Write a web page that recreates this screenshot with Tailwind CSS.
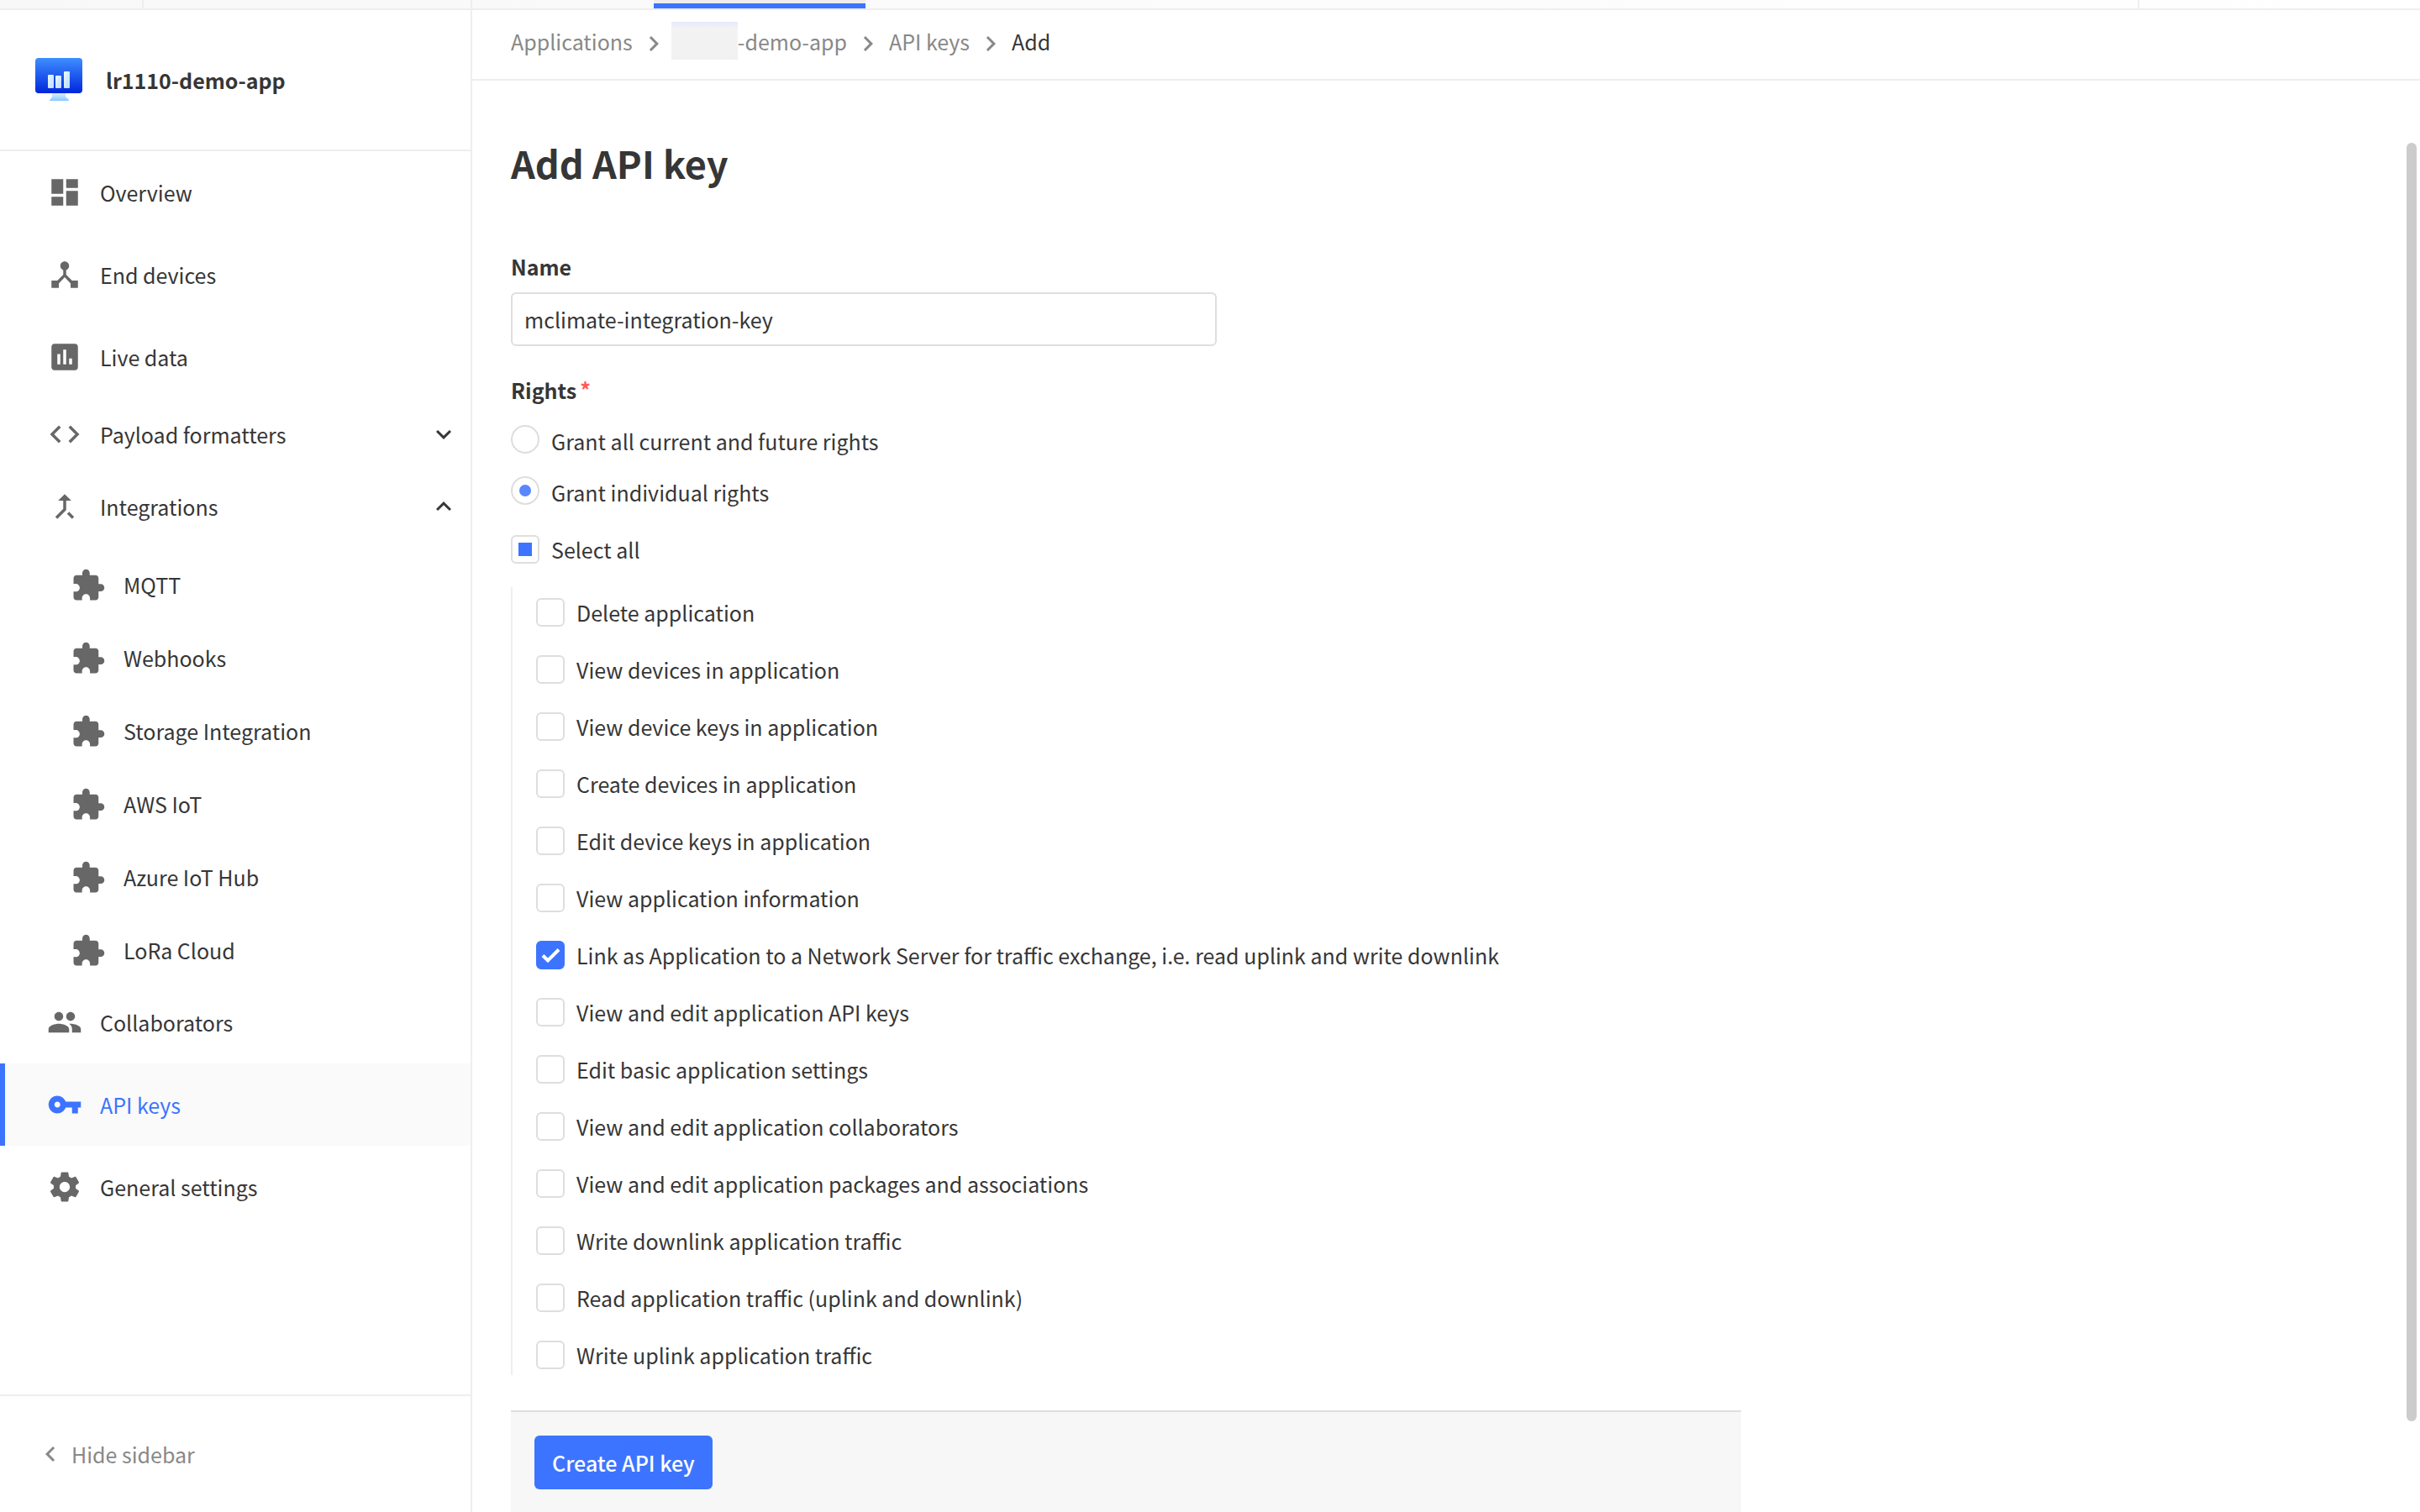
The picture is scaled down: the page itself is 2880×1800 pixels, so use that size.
<!DOCTYPE html>
<html lang="en">
<head>
<meta charset="utf-8">
<title>Add API key</title>
<script src="https://cdn.jsdelivr.net/npm/@tailwindcss/browser@4"></script>
</head>
<body class="flex h-screen flex-col overflow-hidden bg-white font-['Noto_Sans_CJK_SC',sans-serif] text-[25px] leading-[35px] text-[#363636]">

<svg class="hidden" aria-hidden="true">
  <symbol id="puzzle" viewBox="0 0 24 24"><path d="M20.5 11H19V7c0-1.1-.9-2-2-2h-4V3.5C13 2.12 11.88 1 10.5 1S8 2.12 8 3.5V5H4c-1.1 0-1.99.9-1.99 2v3.8H3.5c1.49 0 2.7 1.21 2.7 2.7s-1.21 2.7-2.7 2.7H2V20c0 1.1.9 2 2 2h3.8v-1.5c0-1.49 1.21-2.7 2.7-2.7 1.49 0 2.7 1.21 2.7 2.7V22H17c1.1 0 2-.9 2-2v-4h1.5c1.38 0 2.5-1.12 2.5-2.5S21.88 11 20.5 11z"/></symbol>
  <symbol id="chevron-right" viewBox="0 0 24 24"><path d="M10 6L8.59 7.41 13.17 12l-4.58 4.59L10 18l6-6z"/></symbol>
  <symbol id="tick" viewBox="0 0 34 34"><path d="M8 17.5L14 23.5L27 10.5" fill="none" stroke="currentColor" stroke-width="4"/></symbol>
</svg>

<!-- Lower edge of the top navigation -->
<header class="flex h-3 shrink-0 border-b-2 border-[#eee] bg-linear-to-r from-[#f8f8f8] to-white">
  <div class="w-[171px] border-r-2 border-[#eee]"></div>
  <div class="w-[391px] border-r-2 border-[#eee]"></div>
  <div class="w-[216px]"></div>
  <div class="w-[252px] border-b-6 border-[#3d74ff] bg-[#eee]"></div>
  <div class="mr-[334px] flex-1 border-r-2 border-[#eee]"></div>
</header>

<div class="flex min-h-0 flex-1">
  <aside class="flex w-[562px] shrink-0 flex-col border-r-2 border-[#eee]">
    <div class="flex h-[168px] items-center gap-7 border-b-2 border-[#eee] pl-[42px]">
      <svg class="h-[52px] w-14" viewBox="0 0 56 52" aria-hidden="true">
        <defs>
          <linearGradient id="screen" x1="0" y1="0" x2="0" y2="1"><stop offset="0" stop-color="#3f8eff"/><stop offset="1" stop-color="#0026dc"/></linearGradient>
          <linearGradient id="stand" x1="0" y1="0" x2="0" y2="1"><stop offset="0" stop-color="#e6f4ff"/><stop offset="1" stop-color="#86c8ff"/></linearGradient>
          <linearGradient id="bars" x1="0" y1="0" x2="1" y2="1"><stop offset="0" stop-color="#f0f8ff"/><stop offset="1" stop-color="#b4dcff"/></linearGradient>
        </defs>
        <path d="M20 41h16v4q0 2 2 3q2 1 2 3H17q0-2 2-3q1-1 1-3z" fill="url(#stand)"/>
        <rect width="56" height="42" rx="4" fill="url(#screen)"/>
        <g fill="url(#bars)"><rect x="15" y="20" width="7" height="16" rx="1"/><rect x="24" y="21" width="7" height="15" rx="1"/><rect x="34" y="16" width="7" height="20" rx="1"/></g>
      </svg>
      <span class="font-bold">lr1110-demo-app</span>
    </div>

    <nav class="flex flex-1 flex-col fill-[#676767]">
      <a href="#" class="flex h-[98px] items-center gap-[21px] pl-14">
        <svg class="size-[42px]" viewBox="0 0 24 24"><path d="M3 13h8V3H3v10zm0 8h8v-6H3v6zm10 0h8V11h-8v10zm0-18v6h8V3h-8z"/></svg>
        Overview
      </a>
      <a href="#" class="flex h-[98px] items-center gap-[21px] pl-14">
        <svg class="size-[42px]" viewBox="0 0 24 24"><path d="M17 16l-4-4V8.82C14.16 8.4 15 7.3 15 6c0-1.66-1.34-3-3-3S9 4.34 9 6c0 1.3.84 2.4 2 2.82V12l-4 4H3v5h5v-3.05l4-4.2 4 4.2V21h5v-5h-4z"/></svg>
        End devices
      </a>
      <a href="#" class="flex h-[98px] items-center gap-[21px] pl-14">
        <svg class="size-[42px]" viewBox="0 0 24 24"><path d="M19 3H5c-1.1 0-2 .9-2 2v14c0 1.1.9 2 2 2h14c1.1 0 2-.9 2-2V5c0-1.1-.9-2-2-2zM9 17H7v-7h2v7zm4 0h-2V7h2v10zm4 0h-2v-4h2v4z"/></svg>
        Live data
      </a>
      <button type="button" class="flex h-[86px] items-center gap-[21px] pr-3.5 pl-14 text-left">
        <svg class="size-[42px]" viewBox="0 0 24 24"><path d="M9.4 16.6L4.8 12l4.6-4.6L8 6l-6 6 6 6 1.4-1.4zm5.2 0l4.6-4.6-4.6-4.6L16 6l6 6-6 6-1.4-1.4z"/></svg>
        <span class="flex-1">Payload formatters</span>
        <svg class="size-9 fill-[#363636]" viewBox="0 0 24 24"><path d="M16.59 8.59L12 13.17 7.41 8.59 6 10l6 6 6-6z"/></svg>
      </button>
      <button type="button" class="flex h-[86px] items-center gap-[21px] pr-3.5 pl-14 text-left">
        <svg class="size-[42px]" viewBox="0 0 24 24"><path d="M17 20.41L18.41 19 15 15.59 13.59 17 17 20.41zM7.5 8H11v5.59L5.59 19 7 20.41l6-6V8h3.5L12 3.5 7.5 8z"/></svg>
        <span class="flex-1">Integrations</span>
        <svg class="size-9 fill-[#363636]" viewBox="0 0 24 24"><path d="M12 8l-6 6 1.41 1.41L12 10.83l4.59 4.58L18 14z"/></svg>
      </button>
      <div class="flex flex-col">
        <a href="#" class="flex h-[87px] items-center gap-[21px] pt-3.5 pl-[84px]"><svg class="size-[42px]"><use href="#puzzle"/></svg>MQTT</a>
        <a href="#" class="flex h-[87px] items-center gap-[21px] pt-3.5 pl-[84px]"><svg class="size-[42px]"><use href="#puzzle"/></svg>Webhooks</a>
        <a href="#" class="flex h-[87px] items-center gap-[21px] pt-3.5 pl-[84px]"><svg class="size-[42px]"><use href="#puzzle"/></svg>Storage Integration</a>
        <a href="#" class="flex h-[87px] items-center gap-[21px] pt-3.5 pl-[84px]"><svg class="size-[42px]"><use href="#puzzle"/></svg>AWS IoT</a>
        <a href="#" class="flex h-[87px] items-center gap-[21px] pt-3.5 pl-[84px]"><svg class="size-[42px]"><use href="#puzzle"/></svg>Azure IoT Hub</a>
        <a href="#" class="flex h-[87px] items-center gap-[21px] pt-3.5 pl-[84px]"><svg class="size-[42px]"><use href="#puzzle"/></svg>LoRa Cloud</a>
      </div>
      <a href="#" class="flex h-[98px] items-center gap-[21px] pl-14">
        <svg class="size-[42px]" viewBox="0 0 24 24"><path d="M16 11c1.66 0 2.99-1.34 2.99-3S17.66 5 16 5c-1.66 0-3 1.34-3 3s1.34 3 3 3zm-8 0c1.66 0 2.99-1.34 2.99-3S9.66 5 8 5C6.34 5 5 6.34 5 8s1.34 3 3 3zm0 2c-2.33 0-7 1.17-7 3.5V19h14v-2.5c0-2.33-4.67-3.5-7-3.5zm8 0c-.29 0-.62.02-.97.05 1.16.84 1.97 1.97 1.97 3.45V19h6v-2.5c0-2.33-4.67-3.5-7-3.5z"/></svg>
        Collaborators
      </a>
      <a href="#" aria-current="page" class="flex h-[98px] items-center gap-[21px] border-l-6 border-[#3d74ff] bg-[#fafafa] fill-[#3d74ff] pl-[50px] text-[#3d74ff]">
        <svg class="size-[42px]" viewBox="0 0 24 24"><path d="M12.65 10C11.83 7.67 9.61 6 7 6c-3.31 0-6 2.69-6 6s2.69 6 6 6c2.61 0 4.83-1.67 5.65-4H17v4h4v-4h2v-4H12.65zM7 14c-1.1 0-2-.9-2-2s.9-2 2-2 2 .9 2 2-.9 2-2 2z"/></svg>
        API keys
      </a>
      <a href="#" class="flex h-[98px] items-center gap-[21px] pl-14">
        <svg class="size-[42px]" viewBox="0 0 24 24"><path d="M19.43 12.98c.04-.32.07-.64.07-.98s-.03-.66-.07-.98l2.11-1.65c.19-.15.24-.42.12-.64l-2-3.46c-.12-.22-.39-.3-.61-.22l-2.49 1c-.52-.4-1.08-.73-1.69-.98l-.38-2.65C14.46 2.18 14.25 2 14 2h-4c-.25 0-.46.18-.49.42l-.38 2.65c-.61.25-1.17.59-1.69.98l-2.49-1c-.23-.09-.49 0-.61.22l-2 3.46c-.13.22-.07.49.12.64l2.11 1.65c-.04.32-.07.65-.07.98s.03.66.07.98l-2.11 1.65c-.19.15-.24.42-.12.64l2 3.46c.12.22.39.3.61.22l2.49-1c.52.4 1.08.73 1.69.98l.38 2.65c.03.24.24.42.49.42h4c.25 0 .46-.18.49-.42l.38-2.65c.61-.25 1.17-.59 1.69-.98l2.49 1c.23.09.49 0 .61-.22l2-3.46c.12-.22.07-.49-.12-.64l-2.11-1.65zM12 15.5c-1.93 0-3.5-1.57-3.5-3.5s1.57-3.5 3.5-3.5 3.5 1.57 3.5 3.5-1.57 3.5-3.5 3.5z"/></svg>
        General settings
      </a>
    </nav>

    <button type="button" class="flex h-[140px] items-center gap-[7px] border-t-2 border-[#eee] fill-[#888] pl-[42px] text-[#888]">
      <svg class="size-9" viewBox="0 0 24 24"><path d="M15.41 7.41L14 6l-6 6 6 6 1.41-1.41L10.83 12z"/></svg>
      Hide sidebar
    </button>
  </aside>

  <main class="flex min-w-0 flex-1 flex-col">
    <nav aria-label="Breadcrumb" class="flex h-[84px] shrink-0 items-start gap-[7px] border-b-2 border-[#eee] fill-[#888] pt-5 pl-[46px] text-[#888]">
      <a href="#">Applications</a>
      <svg class="mt-0.5 size-9"><use href="#chevron-right"/></svg>
      <a href="#" class="-mt-1.5 -ml-1 flex"><span class="h-[45px] w-[79px] bg-linear-to-b from-[#e6ebfb] via-[#f3f3f3] via-20% to-[#f1f1f1]"></span><span class="pt-1.5">-demo-app</span></a>
      <svg class="mt-0.5 size-9"><use href="#chevron-right"/></svg>
      <a href="#">API keys</a>
      <svg class="mt-0.5 size-9"><use href="#chevron-right"/></svg>
      <span class="text-[#363636]">Add</span>
    </nav>

    <form class="flex w-full max-w-[1510px] flex-1 flex-col pl-[46px]">
      <h1 class="mt-[66px] text-[45px] leading-[64px] font-bold">Add API key</h1>

      <label for="name" class="mt-[74px] font-bold">Name</label>
      <input id="name" type="text" value="mclimate-integration-key" class="mt-[13px] h-16 w-full max-w-[840px] rounded-md border-2 border-[#dedede] px-3.5">

      <fieldset class="mt-[34px]">
        <legend class="contents font-bold"><span class="flex h-9 items-center gap-1">Rights<span class="h-9 text-[#ff5c5c]">*</span></span></legend>
        <div class="mt-6 flex flex-col gap-[27px]">
          <label class="flex h-[34px] items-center gap-3.5">
            <span class="grid place-items-center">
              <input type="radio" name="rights" class="peer col-start-1 row-start-1 size-[34px] appearance-none rounded-full border-2 border-[#dedede]">
            </span>
            <span class="pt-1">Grant all current and future rights</span>
          </label>
          <label class="flex h-[34px] items-center gap-3.5">
            <span class="grid place-items-center">
              <input type="radio" name="rights" checked class="peer col-start-1 row-start-1 size-[34px] appearance-none rounded-full border-2 border-[#dedede]">
              <span class="col-start-1 row-start-1 hidden size-3.5 rounded-full bg-[#5886ff] peer-checked:block"></span>
            </span>
            <span class="pt-1">Grant individual rights</span>
          </label>
        </div>
        <label class="mt-9 flex h-[34px] items-center gap-3.5">
          <span class="grid place-items-center">
            <input id="select-all" type="checkbox" class="peer col-start-1 row-start-1 size-[34px] appearance-none rounded-md border-2 border-[#dedede]">
            <span class="col-start-1 row-start-1 hidden size-4 bg-[#3d74ff] peer-indeterminate:block"></span>
          </span>
          Select all
        </label>

        <div class="mt-7 flex flex-col gap-[34px] border-l-2 border-[#eee] pt-[13px] pb-[7px] pl-7">
          <label class="flex h-[34px] items-center gap-3.5"><input type="checkbox" class="size-[34px] appearance-none rounded-md border-2 border-[#dedede]">Delete application</label>
          <label class="flex h-[34px] items-center gap-3.5"><input type="checkbox" class="size-[34px] appearance-none rounded-md border-2 border-[#dedede]">View devices in application</label>
          <label class="flex h-[34px] items-center gap-3.5"><input type="checkbox" class="size-[34px] appearance-none rounded-md border-2 border-[#dedede]">View device keys in application</label>
          <label class="flex h-[34px] items-center gap-3.5"><input type="checkbox" class="size-[34px] appearance-none rounded-md border-2 border-[#dedede]">Create devices in application</label>
          <label class="flex h-[34px] items-center gap-3.5"><input type="checkbox" class="size-[34px] appearance-none rounded-md border-2 border-[#dedede]">Edit device keys in application</label>
          <label class="flex h-[34px] items-center gap-3.5"><input type="checkbox" class="size-[34px] appearance-none rounded-md border-2 border-[#dedede]">View application information</label>
          <label class="flex h-[34px] items-center gap-3.5">
            <span class="grid place-items-center">
              <input type="checkbox" checked class="peer col-start-1 row-start-1 size-[34px] appearance-none rounded-md border-2 border-[#dedede] checked:border-[#3d74ff] checked:bg-[#3d74ff]">
              <svg class="pointer-events-none col-start-1 row-start-1 hidden size-[34px] text-white peer-checked:block"><use href="#tick"/></svg>
            </span>
            Link as Application to a Network Server for traffic exchange, i.e. read uplink and write downlink
          </label>
          <label class="flex h-[34px] items-center gap-3.5"><input type="checkbox" class="size-[34px] appearance-none rounded-md border-2 border-[#dedede]">View and edit application API keys</label>
          <label class="flex h-[34px] items-center gap-3.5"><input type="checkbox" class="size-[34px] appearance-none rounded-md border-2 border-[#dedede]">Edit basic application settings</label>
          <label class="flex h-[34px] items-center gap-3.5"><input type="checkbox" class="size-[34px] appearance-none rounded-md border-2 border-[#dedede]">View and edit application collaborators</label>
          <label class="flex h-[34px] items-center gap-3.5"><input type="checkbox" class="size-[34px] appearance-none rounded-md border-2 border-[#dedede]">View and edit application packages and associations</label>
          <label class="flex h-[34px] items-center gap-3.5"><input type="checkbox" class="size-[34px] appearance-none rounded-md border-2 border-[#dedede]">Write downlink application traffic</label>
          <label class="flex h-[34px] items-center gap-3.5"><input type="checkbox" class="size-[34px] appearance-none rounded-md border-2 border-[#dedede]">Read application traffic (uplink and downlink)</label>
          <label class="flex h-[34px] items-center gap-3.5"><input type="checkbox" class="size-[34px] appearance-none rounded-md border-2 border-[#dedede]">Write uplink application traffic</label>
        </div>
      </fieldset>

      <div class="mt-[42px] flex-1 border-t-2 border-[#dedede] bg-[#f7f7f7] px-7 pt-7">
        <button type="submit" class="h-16 rounded-md bg-[#3d74ff] px-[21px] font-medium text-white">Create API key</button>
      </div>
    </form>
  </main>
</div>

<!-- Overlay scroll thumb -->
<div aria-hidden="true" class="absolute top-[170px] right-1 bottom-[108px] w-3 rounded-full bg-[#ccc]"></div>

<script>
  document.getElementById('select-all').indeterminate = true;
</script>
</body>
</html>
